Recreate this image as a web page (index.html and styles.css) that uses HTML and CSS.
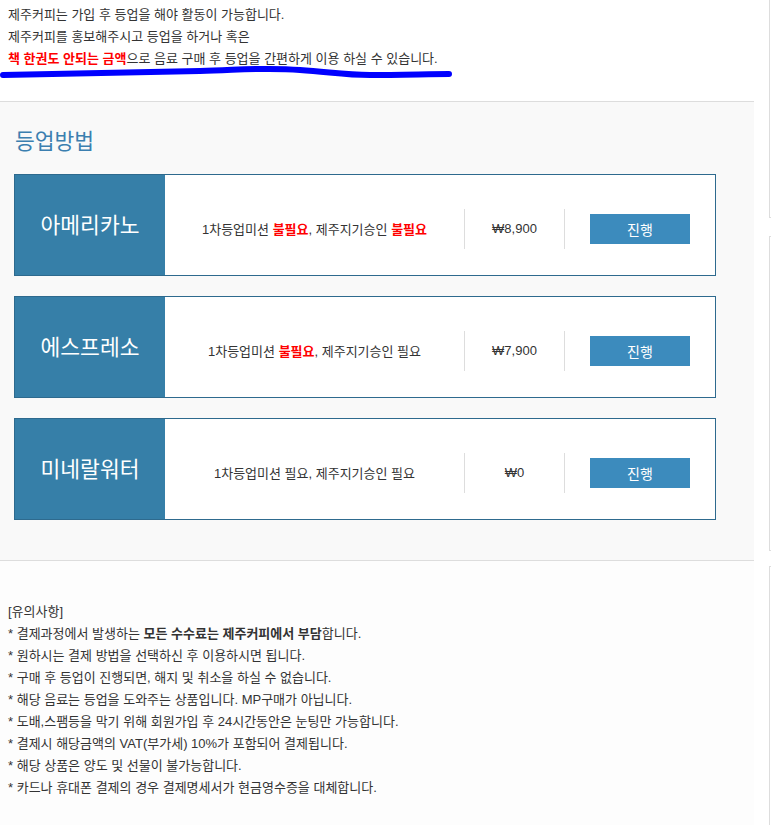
FILE: index.html
```html
<!DOCTYPE html>
<html lang="ko">
<head>
<meta charset="utf-8">
<title>등업방법</title>
<link rel="stylesheet" href="styles.css">
</head>
<body>
<div class="page">
  <div class="main">
    <div class="intro">
      <p>제주커피는 가입 후 등업을 해야 활동이 가능합니다.</p>
      <p>제주커피를 홍보해주시고 등업을 하거나 혹은</p>
      <p><strong class="red">책 한권도 안되는 금액</strong>으로 음료 구매 후 등업을 간편하게 이용 하실 수 있습니다.</p>
      <svg class="scribble" width="460" height="20" viewBox="0 0 460 20">
        <path d="M3 13 C 60 12, 130 10, 200 9 C 240 8, 265 5, 300 8 C 330 10, 345 13, 370 13 C 400 13, 430 12, 449 12" fill="none" stroke="#0000ff" stroke-width="6" stroke-linecap="round"/>
      </svg>
    </div>

    <section class="method">
      <h2 class="title">등업방법</h2>
      <div class="cards">
        <div class="card">
          <div class="name">아메리카노</div>
          <div class="info">
            <div class="desc">1차등업미션 <b class="red">불필요</b>, 제주지기승인 <b class="red">불필요</b></div>
            <div class="price">₩8,900</div>
            <div class="action"><button class="btn">진행</button></div>
          </div>
        </div>
        <div class="card">
          <div class="name">에스프레소</div>
          <div class="info">
            <div class="desc">1차등업미션 <b class="red">불필요</b>, 제주지기승인 필요</div>
            <div class="price">₩7,900</div>
            <div class="action"><button class="btn">진행</button></div>
          </div>
        </div>
        <div class="card">
          <div class="name">미네랄워터</div>
          <div class="info">
            <div class="desc">1차등업미션 필요, 제주지기승인 필요</div>
            <div class="price">₩0</div>
            <div class="action"><button class="btn">진행</button></div>
          </div>
        </div>
      </div>
    </section>

    <div class="notice">
      <p>[유의사항]</p>
      <p>* 결제과정에서 발생하는 <strong>모든 수수료는 제주커피에서 부담</strong>합니다.</p>
      <p>* 원하시는 결제 방법을 선택하신 후 이용하시면 됩니다.</p>
      <p>* 구매 후 등업이 진행되면, 해지 및 취소을 하실 수 없습니다.</p>
      <p>* 해당 음료는 등업을 도와주는 상품입니다. MP구매가 아닙니다.</p>
      <p>* 도배,스팸등을 막기 위해 회원가입 후 24시간동안은 눈팅만 가능합니다.</p>
      <p>* 결제시 해당금액의 VAT(부가세) 10%가 포함되어 결제됩니다.</p>
      <p>* 해당 상품은 양도 및 선물이 불가능합니다.</p>
      <p>* 카드나 휴대폰 결제의 경우 결제명세서가 현금영수증을 대체합니다.</p>
    </div>
  </div>

  <aside class="side">
    <div class="box box1"></div>
    <div class="box box2"></div>
    <div class="box box3"></div>
  </aside>
</div>
</body>
</html>
```

FILE: styles.css
```css
html, body {
  margin: 0;
  padding: 0;
  background: #ffffff;
}
body {
  font-family: "Liberation Sans", "Noto Sans CJK KR", sans-serif;
  font-size: 13px;
  color: #333333;
  overflow: hidden;
}
p {
  margin: 0;
  line-height: 22px;
}
.red {
  color: #ff0000;
  font-weight: bold;
}
.page {
  display: flex;
  width: 771px;
  height: 825px;
  overflow: hidden;
}
.main {
  flex: 0 0 754px;
  width: 754px;
}
.intro {
  position: relative;
  padding: 4px 8px 31px;
}
.scribble {
  position: absolute;
  left: 0;
  top: 62px;
}
.method {
  background: #f9f9f9;
  border-top: 1px solid #dddddd;
  border-bottom: 1px solid #dddddd;
  padding: 25px 0 40px;
}
.title {
  margin: 0 0 17px 15px;
  font-size: 21.5px;
  line-height: 30px;
  font-weight: normal;
  color: #3b7fb0;
}
.cards {
  display: flex;
  flex-direction: column;
  gap: 20px;
  margin-left: 14px;
  width: 702px;
}
.card {
  display: flex;
  height: 100px;
  border: 1px solid #2e6a8e;
  background: #ffffff;
}
.name {
  flex: 0 0 150px;
  background: #367fa8;
  color: #ffffff;
  font-size: 21.5px;
  display: flex;
  align-items: center;
  justify-content: center;
  padding-bottom: 4px;
  box-sizing: border-box;
}
.info {
  flex: 1;
  display: flex;
  align-items: center;
  padding-top: 7px;
}
.desc {
  flex: 1;
  text-align: center;
}
.price {
  flex: 0 0 99px;
  height: 40px;
  display: flex;
  align-items: center;
  justify-content: center;
  border-left: 1px solid #dddddd;
  border-right: 1px solid #dddddd;
}
.action {
  flex: 0 0 150px;
  display: flex;
  justify-content: center;
}
.btn {
  width: 100px;
  height: 30px;
  border: 0;
  background: #3c8bbd;
  color: #ffffff;
  font-family: "Liberation Sans", "Noto Sans CJK KR", sans-serif;
  font-size: 14px;
  padding: 0;
}
.notice {
  background: #fdfdfd;
  padding: 40px 8px 30px;
}
.side {
  flex: 0 0 200px;
  margin-left: 15px;
  display: flex;
  flex-direction: column;
}
.box {
  flex-shrink: 0;
  border: 1px solid #dddddd;
  background: #ffffff;
}
.box1 {
  border-top: 0;
  height: 217px;
}
.box2 {
  margin-top: 18px;
  height: 313px;
}
.box3 {
  margin-top: 15px;
  height: 400px;
}
```
